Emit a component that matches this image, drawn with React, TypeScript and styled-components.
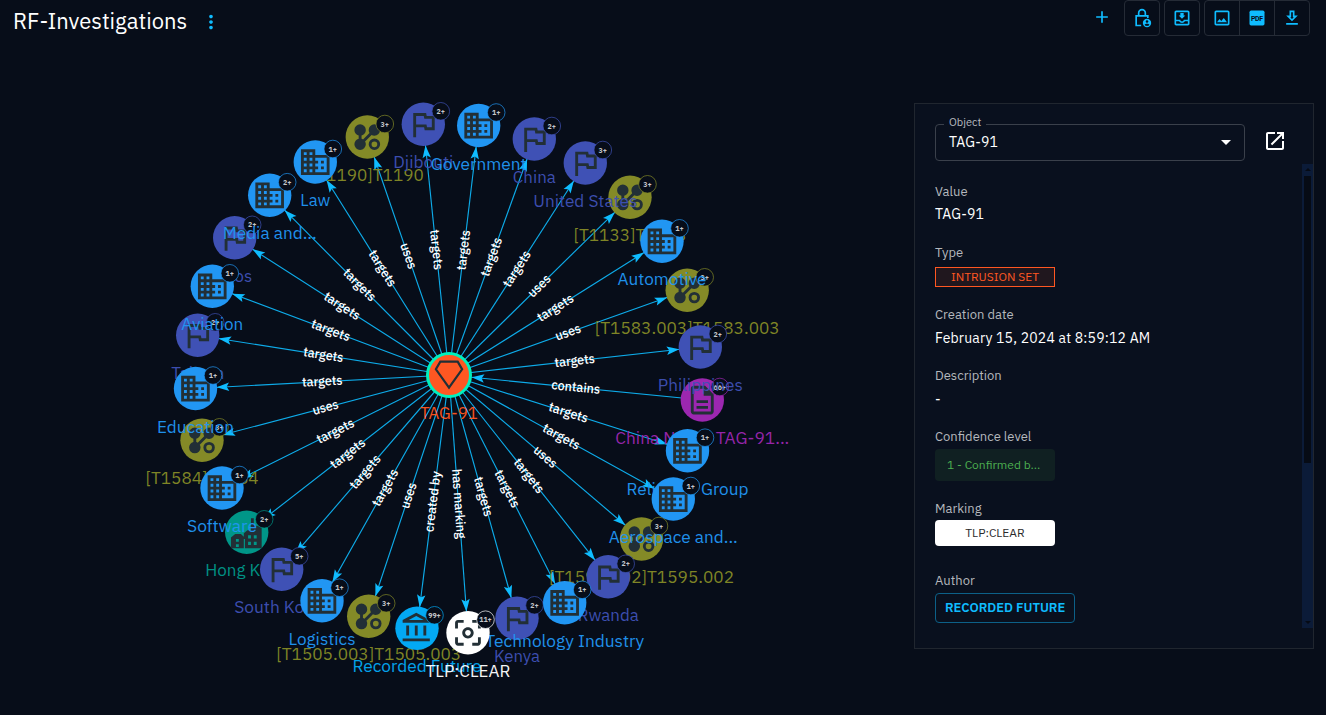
import React from "react";
import styled, { createGlobalStyle } from "styled-components";

const FONT = '"IBM Plex Sans", "Noto Sans", sans-serif';
const BLUE = "#0fbcff";

const GlobalStyle = createGlobalStyle`
  body { margin: 0; background: #070d19; color: #fff; font-family: ${FONT}; overflow: hidden; }
  * { box-sizing: border-box; }
`;

/* ---------- icon paths (24 x 24 grid) ---------- */

const PATHS = {
  flag: "M12.36 6l.4 2H18v6h-3.36l-.4-2H7V6h5.36M14 4H5v17h2v-7h5.6l.4 2h7V6h-5.6L14 4z",
  sector:
    "M12 7V3H2v18h20V7H12zM6 19H4v-2h2v2zm0-4H4v-2h2v2zm0-4H4V9h2v2zm0-4H4V5h2v2zm4 12H8v-2h2v2zm0-4H8v-2h2v2zm0-4H8V9h2v2zm0-4H8V5h2v2zm10 12h-8v-2h2v-2h-2v-2h2v-2h-2V9h8v10zm-2-8h-2v2h2v-2zm0 4h-2v2h2v-2z",
  attack:
    "M7,3A4,4 0 0,1 11,7C11,8.86 9.73,10.43 8,10.87V13.13C8.37,13.22 8.72,13.37 9.04,13.56L13.56,9.04C13.2,8.44 13,7.75 13,7A4,4 0 0,1 17,3A4,4 0 0,1 21,7A4,4 0 0,1 17,11C16.26,11 15.57,10.8 15,10.45L10.45,15C10.8,15.57 11,16.26 11,17A4,4 0 0,1 7,21A4,4 0 0,1 3,17C3,15.14 4.27,13.57 6,13.13V10.87C4.27,10.43 3,8.86 3,7A4,4 0 0,1 7,3M17,13A4,4 0 0,1 21,17A4,4 0 0,1 17,21A4,4 0 0,1 13,17A4,4 0 0,1 17,13M17,15A2,2 0 0,0 15,17A2,2 0 0,0 17,19A2,2 0 0,0 19,17A2,2 0 0,0 17,15Z",
  report:
    "M8 16h8v2H8zm0-4h8v2H8zm6-10H6c-1.1 0-2 .9-2 2v16c0 1.1.89 2 1.99 2H18c1.1 0 2-.9 2-2V8l-6-6zm4 18H6V4h7v5h5v11z",
  org: "M6.5 10h-2v7h2v-7zm6 0h-2v7h2v-7zm8.5 9H2v2h19v-2zm-2.5-9h-2v7h2v-7zm-7-6.74L16.71 6H6.29l5.21-2.74m0-2.26L2 6v2h19V6l-9.5-5z",
  marking:
    "M5 15H3v4c0 1.1.9 2 2 2h4v-2H5v-4zM5 5h4V3H5c-1.1 0-2 .9-2 2v4h2V5zm14-2h-4v2h4v4h2V5c0-1.1-.9-2-2-2zm0 16h-4v2h4c1.1 0 2-.9 2-2v-4h-2v4zM12 8c-2.21 0-4 1.79-4 4s1.79 4 4 4 4-1.79 4-4-1.79-4-4-4zm0 6c-1.1 0-2-.9-2-2s.9-2 2-2 2 .9 2 2-.9 2-2 2z",
  city: "M1 23V15.500L4 13H8L10 15V12.500L12.500 10.500H15V2H17V7L22.500 8V23ZM4.500 16.500h2v2h-2zM4.500 20.200h2v2h-2zM13 14h2v2.300h-2zM17 14h2v2.300h-2zM13 18.500h2v2.300h-2zM17 18.500h2v2.300h-2zM10 16.500h.8V23H10z",
  more: "M12 8c1.1 0 2-.9 2-2s-.9-2-2-2-2 .9-2 2 .9 2 2 2zm0 2c-1.1 0-2 .9-2 2s.9 2 2 2 2-.9 2-2-.9-2-2-2zm0 6c-1.1 0-2 .9-2 2s.9 2 2 2 2-.9 2-2-.9-2-2-2z",
  add: "M19 13h-6v6h-2v-6H5v-2h6V5h2v6h6v2z",
  inbox:
    "M19 3H5c-1.1 0-2 .9-2 2v14c0 1.1.9 2 2 2h14c1.1 0 2-.9 2-2V5c0-1.1-.9-2-2-2zm0 16H5v-3h3.56c.69 1.19 1.97 2 3.45 2s2.75-.81 3.45-2H19v3zm0-5h-4.99c0 1.1-.9 2-2 2s-2-.9-2-2H5V5h14v9zm-3-5h-2V6h-4v3H8l4 4z",
  image:
    "M19 5v14H5V5h14m0-2H5c-1.1 0-2 .9-2 2v14c0 1.1.9 2 2 2h14c1.1 0 2-.9 2-2V5c0-1.1-.9-2-2-2zm-4.86 8.86l-3 3.87L9 13.14 6 17h12l-3.86-5.14z",
  download: "M19 9h-4V3H9v6H5l7 7 7-7zm-8 2V5h2v6h1.17L12 13.17 9.83 11H11zm-6 7h14v2H5v-2z",
  open: "M19 19H5V5h7V3H5c-1.11 0-2 .9-2 2v14c0 1.1.89 2 2 2h14c1.1 0 2-.9 2-2v-7h-2v7zM14 3v2h3.59l-9.83 9.83 1.41 1.41L19 6.41V10h2V3h-7z",
  drop: "M7 10l5 5 5-5z",
};

const Glyph = ({ d, size = 20 }: { d: string; size?: number }) => (
  <svg width={size} height={size} viewBox="0 0 24 24" fill="currentColor" fillRule="evenodd">
    <path d={d} />
  </svg>
);

const LockAccountIcon = () => (
  <svg width="20" height="20" viewBox="0 0 24 24" fill="none" stroke="currentColor" strokeWidth="2">
    <path d="M11 21H5V9.500h14V12M8 9.500V6a4 4 0 0 1 8 0V9.500" />
    <circle cx="18" cy="18" r="5" fill="currentColor" stroke="none" />
    <circle cx="18" cy="16.300" r="1.500" fill="#070d19" stroke="none" />
    <path d="M15 20.200c1-1.900 5-1.900 6 0c-1.300 1.900-4.700 1.900-6 0z" fill="#070d19" stroke="none" />
  </svg>
);

const PdfIcon = () => (
  <svg width="20" height="20" viewBox="0 0 24 24">
    <rect x="3" y="3" width="18" height="18" rx="2" fill={BLUE} />
    <text x="12" y="15" textAnchor="middle" textLength="14.500" fontFamily="Roboto" fontWeight="700" fontSize="8.400" fill="#070d19">
      PDF
    </text>
  </svg>
);

/* ---------- graph ---------- */

type Kind = "sector" | "flag" | "attack" | "report" | "org" | "marking" | "city";

const COLORS: Record<Kind, string> = {
  report: "#9c27b0",
  attack: "#848a27",
  city: "#009688",
  flag: "#3f51b5",
  sector: "#2196f3",
  org: "#03a9f4",
  marking: "#ffffff",
};

interface GraphNode {
  kind: Kind;
  x: number;
  y: number;
  name: string;
  width: number;
  count: string;
  link: string;
}

const n = (kind: Kind, x: number, y: number, name: string, width: number, count: string, link: string): GraphNode => ({
  kind, x, y, name, width, count, link,
});

/* Listed in painting order: later nodes cover earlier ones. */
const NODES: GraphNode[] = [
  n("report", 702.3, 400, "China Nexus TAG-91...", 174, "66+", "contains"),
  n("attack", 367.3, 137, "[T1190]T1190", 113, "3+", "uses"),
  n("attack", 630, 197.3, "[T1133]T1133", 113, "3+", "uses"),
  n("attack", 687.2, 290.3, "[T1583.003]T1583.003", 185, "3+", "uses"),
  n("attack", 641.5, 539, "[T1595.002]T1595.002", 185, "3+", "uses"),
  n("attack", 368.7, 616.3, "[T1505.003]T1505.003", 185, "3+", "uses"),
  n("attack", 202, 440.3, "[T1584]T1584", 113, "3+", "uses"),
  n("city", 246.7, 532.3, "Hong Kong", 83, "2+", "targets"),
  n("flag", 423.3, 124.3, "Djibouti", 60, "2+", "targets"),
  n("flag", 534.3, 139, "China", 43, "2+", "targets"),
  n("flag", 585.3, 163, "United States", 104, "3+", "targets"),
  n("flag", 700.3, 347, "Philippines", 85, "2+", "targets"),
  n("flag", 608.2, 576.8, "Rwanda", 61, "2+", "targets"),
  n("flag", 517, 618.3, "Kenya", 46, "2+", "targets"),
  n("flag", 281.7, 569.3, "South Korea", 95, "5+", "targets"),
  n("flag", 197.7, 335.3, "Taiwan", 53, "2+", "targets"),
  n("flag", 234.7, 237.8, "Laos", 35, "2+", "targets"),
  n("sector", 478.7, 125.5, "Government", 96, "1+", "targets"),
  n("sector", 662, 241.3, "Automotive", 89, "1+", "targets"),
  n("sector", 687.5, 450.7, "Religious Group", 122, "1+", "targets"),
  n("sector", 673.3, 499, "Aerospace and...", 129, "1+", "targets"),
  n("sector", 564.7, 602.8, "Technology Industry", 159, "1+", "targets"),
  n("sector", 322, 600.7, "Logistics", 67, "1+", "targets"),
  n("sector", 222, 488, "Software", 70, "1+", "targets"),
  n("sector", 195.5, 388.5, "Education", 77, "1+", "targets"),
  n("sector", 212.3, 286.3, "Aviation", 62, "1+", "targets"),
  n("sector", 269.7, 195.2, "Media and...", 94, "2+", "targets"),
  n("sector", 315.3, 162, "Law", 30, "1+", "targets"),
  n("org", 417, 628.3, "Recorded Future", 129, "99+", "created by"),
  n("marking", 468, 632.7, "TLP:CLEAR", 85, "11+", "has marking"),
];

const LINK_WIDTHS: Record<string, number> = {
  targets: 40.5,
  uses: 26.5,
  contains: 49,
  "created by": 61,
  "has marking": 70,
};

const CENTER = { x: 449, y: 375 };
const R = 21.7;

const GraphSvg = styled.svg`
  flex: 0 0 914px;
  height: 665px;
  display: block;
`;

const NodeLabel = styled.text`
  font: 400 16.8px ${FONT};
  text-anchor: middle;
  opacity: 0.96;
`;

const LinkLabel = styled.text`
  font: 500 13.2px ${FONT};
  text-anchor: middle;
  fill: #fff;
`;

const CountLabel = styled.text`
  font: 700 7.2px ${FONT};
  text-anchor: middle;
  fill: #c4c6ca;
`;

const Edge = ({ node }: { node: GraphNode }) => {
  const dx = node.x - CENTER.x;
  const dy = node.y - CENTER.y;
  const len = Math.hypot(dx, dy);
  const inward = node.link === "contains";
  const tip = inward ? 22.8 : len - R + 0.5;
  const dir = (Math.atan2(dy, dx) * 180) / Math.PI;
  return (
    <g transform={`translate(${CENTER.x} ${CENTER.y}) rotate(${dir})`}>
      <line x1="0" y1="0" x2={len} y2="0" stroke={BLUE} strokeWidth="1.15" opacity="0.9" />
      <path transform={`translate(${tip} 0)${inward ? " scale(-1 1)" : ""}`} d="M0 0L-12.500 -4.200L-10 0L-12.500 4.200Z" fill={BLUE} />
    </g>
  );
};

const EdgeLabel = ({ node }: { node: GraphNode }) => {
  const dx = node.x - CENTER.x;
  const dy = node.y - CENTER.y;
  let angle = (Math.atan2(dy, dx) * 180) / Math.PI;
  if (angle > 90) angle -= 180;
  if (angle < -90) angle += 180;
  return (
    <LinkLabel
      y="4"
      transform={`translate(${CENTER.x + dx / 2} ${CENTER.y + dy / 2}) rotate(${angle})`}
      textLength={LINK_WIDTHS[node.link]}
      lengthAdjust="spacingAndGlyphs"
    >
      {node.link}
    </LinkLabel>
  );
};

const NodeMark = ({ node }: { node: GraphNode }) => (
  <g transform={`translate(${node.x} ${node.y})`}>
    <circle r={R} fill={COLORS[node.kind]} />
    <path
      transform="translate(-17.200 -17) scale(1.430)"
      d={PATHS[node.kind]}
      fill="#222f36"
      fillRule={node.kind === "attack" ? "nonzero" : "evenodd"}
    />
    <circle cx="17.500" cy="-13" r="8.800" fill="#070d19" stroke={COLORS[node.kind]} strokeWidth="0.700" />
    <CountLabel x="17.500" y="-10.500" textLength={node.count.length > 2 ? 12.5 : 8.4} lengthAdjust="spacingAndGlyphs">
      {node.count}
    </CountLabel>
    <NodeLabel y="44.050" fill={COLORS[node.kind]} textLength={node.width} lengthAdjust="spacingAndGlyphs">
      {node.name}
    </NodeLabel>
  </g>
);

const Graph = () => (
  <GraphSvg viewBox="0 50 914 665">
    {NODES.map((node) => (
      <Edge key={node.name} node={node} />
    ))}
    {NODES.map((node) => (
      <EdgeLabel key={node.name} node={node} />
    ))}
    {NODES.map((node) => (
      <NodeMark key={node.name} node={node} />
    ))}
    <g transform={`translate(${CENTER.x} ${CENTER.y})`}>
      <circle r="21.500" fill="#ff5722" stroke="#00f1bd" strokeWidth="3" />
      <path d="M-8.700 -13.300H8.700L13.100 -5.700L0 12.700L-13.100 -5.700Z" fill="none" stroke="#222f36" strokeWidth="2.200" />
      <NodeLabel y="44.050" fill="#ff5722" textLength="58" lengthAdjust="spacingAndGlyphs">
        TAG-91
      </NodeLabel>
    </g>
  </GraphSvg>
);

/* ---------- page ---------- */

const Page = styled.div`
  width: 1326px;
  height: 715px;
  display: flex;
  flex-direction: column;
  overflow: hidden;
`;

const Header = styled.header`
  height: 50px;
  display: flex;
  align-items: flex-start;
  padding: 0 16px 0 13px;
`;

const Title = styled.h1`
  margin: 7px 0 0;
  font-size: 22px;
  font-weight: 400;
  line-height: 28px;
  white-space: nowrap;
`;

const MoreButton = styled.div`
  margin: 11px 0 0 13px;
  height: 22px;
  color: ${BLUE};
`;

const Tools = styled.div`
  margin-left: auto;
  display: flex;
  color: ${BLUE};
`;

const AddButton = styled.div`
  margin: 7px 8px 0 0;
  height: 20px;
`;

const ButtonGroup = styled.div`
  display: flex;
  height: 36px;
  margin-left: 4px;
  border: 1px solid #252b36;
  border-radius: 4px;
`;

const ToolButton = styled.div`
  width: 34px;
  display: flex;
  align-items: center;
  justify-content: center;
  & + & {
    width: 35px;
    border-left: 1px solid #252b36;
  }
`;

const Body = styled.main`
  display: flex;
  align-items: flex-start;
`;

const Panel = styled.aside`
  width: 400px;
  height: 546px;
  margin-top: 53px;
  border: 1px solid #20262f;
  background: #09101e;
  display: flex;
  flex-direction: column;
`;

const SelectRow = styled.div`
  display: flex;
  align-items: center;
  padding: 11px 0 0 20px;
`;

const Select = styled.fieldset`
  width: 310px;
  height: 46px;
  margin: 0;
  padding: 0 6px 0 13px;
  border: 1px solid #3a404b;
  border-radius: 4px;
  display: flex;
`;

const Legend = styled.legend`
  margin-left: -5px;
  padding: 0 5px;
  height: 18px;
  font-size: 11px;
  line-height: 15px;
  color: #b8bbc0;
`;

const SelectValue = styled.div`
  display: flex;
  width: 100%;
  height: 18px;
  align-items: center;
  justify-content: space-between;
  font-size: 14px;
  letter-spacing: 0.15px;
`;

const OpenLink = styled.div`
  margin: 6px 0 0 18px;
  height: 24px;
`;

const Scroller = styled.div`
  display: flex;
  justify-content: space-between;
  height: 464px;
  margin-top: 3px;
`;

const Fields = styled.div`
  padding: 18px 0 0 20px;
`;

const Field = styled.div<{ $height?: number }>`
  height: ${(p) => p.$height ?? 61}px;
`;

const FieldLabel = styled.div`
  height: 20px;
  font-size: 13px;
  line-height: 20px;
  color: #b5b8bd;
`;

const FieldValue = styled.div<{ $gap?: number }>`
  margin-top: ${(p) => p.$gap ?? 3}px;
  font-size: 14px;
  line-height: 20px;
  letter-spacing: 0.18px;
`;

const TypeChip = styled.div`
  margin-top: 4px;
  width: 120px;
  height: 20px;
  border: 1px solid #ff5722;
  background: #20171e;
  color: #ff5722;
  font-size: 12px;
  line-height: 18px;
  text-align: center;
`;

const LevelChip = styled.div`
  margin-top: 2px;
  width: 120px;
  height: 32px;
  padding-left: 12px;
  border-radius: 4px;
  background: #102022;
  color: #4caf50;
  font-size: 12px;
  line-height: 32px;
`;

const MarkingChip = styled.div`
  margin-top: 1px;
  width: 120px;
  height: 26px;
  border-radius: 4px;
  background: #fff;
  color: #2b2b2b;
  font-size: 12px;
  line-height: 26px;
  text-align: center;
`;

const AuthorButton = styled.div`
  margin-top: 2px;
  width: 140px;
  height: 30px;
  padding-left: 9px;
  border: 1px solid #0c6088;
  border-radius: 4px;
  color: ${BLUE};
  font-size: 13px;
  font-weight: 600;
  line-height: 28px;
  letter-spacing: -0.03px;
  white-space: nowrap;
`;

const Track = styled.div`
  width: 11px;
  background: #0b1b38;
  display: flex;
  flex-direction: column;
  align-items: center;
  justify-content: space-between;
`;

const Thumb = styled.div`
  width: 7px;
  height: 287px;
  margin-bottom: 154px;
  background: #060b15;
`;

const Arrow = styled.div<{ $down?: boolean }>`
  width: 0;
  margin: 4px 0;
  border: 3px solid transparent;
  border-top-width: ${(p) => (p.$down ? 3 : 0)}px;
  border-bottom-width: ${(p) => (p.$down ? 0 : 3)}px;
  border-${(p) => (p.$down ? "top" : "bottom")}-color: #060b15;
`;

export default function App() {
  return (
    <Page>
      <GlobalStyle />
      <Header>
        <Title>RF-Investigations</Title>
        <MoreButton>
          <Glyph d={PATHS.more} size={22} />
        </MoreButton>
        <Tools>
          <AddButton>
            <Glyph d={PATHS.add} />
          </AddButton>
          <ButtonGroup>
            <ToolButton><LockAccountIcon /></ToolButton>
          </ButtonGroup>
          <ButtonGroup>
            <ToolButton><Glyph d={PATHS.inbox} /></ToolButton>
          </ButtonGroup>
          <ButtonGroup>
            <ToolButton><Glyph d={PATHS.image} /></ToolButton>
            <ToolButton><PdfIcon /></ToolButton>
            <ToolButton><Glyph d={PATHS.download} /></ToolButton>
          </ButtonGroup>
        </Tools>
      </Header>
      <Body>
        <Graph />
        <Panel>
          <SelectRow>
            <Select>
              <Legend>Object</Legend>
              <SelectValue>
                TAG-91
                <Glyph d={PATHS.drop} size={24} />
              </SelectValue>
            </Select>
            <OpenLink>
              <Glyph d={PATHS.open} size={24} />
            </OpenLink>
          </SelectRow>
          <Scroller>
            <Fields>
              <Field>
                <FieldLabel>Value</FieldLabel>
                <FieldValue $gap={2}>TAG-91</FieldValue>
              </Field>
              <Field $height={62}>
                <FieldLabel>Type</FieldLabel>
                <TypeChip>INTRUSION SET</TypeChip>
              </Field>
              <Field>
                <FieldLabel>Creation date</FieldLabel>
                <FieldValue>February 15, 2024 at 8:59:12 AM</FieldValue>
              </Field>
              <Field>
                <FieldLabel>Description</FieldLabel>
                <FieldValue>-</FieldValue>
              </Field>
              <Field $height={72}>
                <FieldLabel>Confidence level</FieldLabel>
                <LevelChip>1 - Confirmed b...</LevelChip>
              </Field>
              <Field $height={72}>
                <FieldLabel>Marking</FieldLabel>
                <MarkingChip>TLP:CLEAR</MarkingChip>
              </Field>
              <Field $height={54}>
                <FieldLabel>Author</FieldLabel>
                <AuthorButton>RECORDED FUTURE</AuthorButton>
              </Field>
            </Fields>
            <Track>
              <Arrow />
              <Thumb />
              <Arrow $down />
            </Track>
          </Scroller>
        </Panel>
      </Body>
    </Page>
  );
}
